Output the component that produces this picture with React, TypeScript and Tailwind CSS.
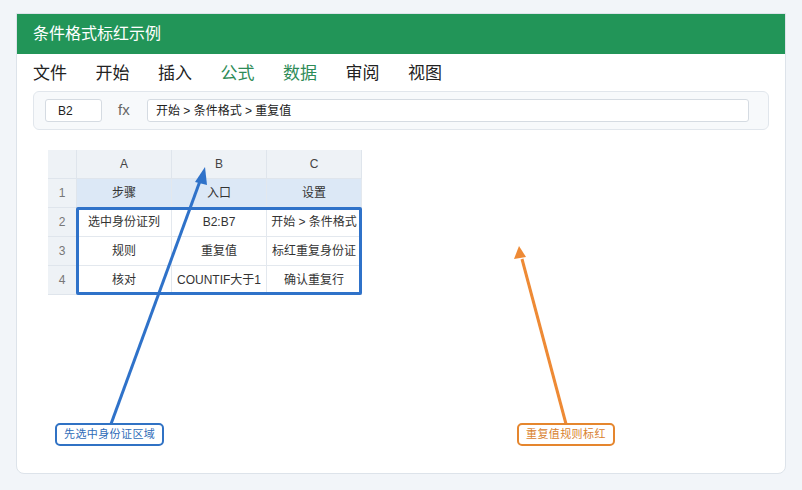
const menu = [
  { label: "文件", green: false },
  { label: "开始", green: false },
  { label: "插入", green: false },
  { label: "公式", green: true },
  { label: "数据", green: true },
  { label: "审阅", green: false },
  { label: "视图", green: false },
];

const rows = [
  ["步骤", "入口", "设置"],
  ["选中身份证列", "B2:B7", "开始 > 条件格式"],
  ["规则", "重复值", "标红重复身份证"],
  ["核对", "COUNTIF大于1", "确认重复行"],
];

const Sheet = () => {
  return (
    <div className="relative ml-[31px] mt-[20px] w-[314px]">
      <div className="grid grid-cols-[29px_95px_95px_95px] text-[12px] text-[#333]">
        <div className="h-[29px] bg-[#eef2f6] border-r border-b border-[#dfe5ec]" />
        {["A", "B", "C"].map((c) => (
          <div key={c} className="h-[29px] flex items-center justify-center bg-[#eef2f6] border-r border-b border-[#dfe5ec] text-[#444]">
            {c}
          </div>
        ))}
        {rows.map((r, i) => (
          <>
            <div key={"h" + i} className="h-[29px] flex items-center justify-center bg-[#eef2f6] border-r border-b border-[#dfe5ec] text-[#777]">
              {i + 1}
            </div>
            {r.map((v, j) => (
              <div
                key={i + "-" + j}
                className={`h-[29px] flex items-center justify-center whitespace-nowrap overflow-hidden border-r border-b border-[#e3e8ee] ${i == 0 ? "bg-[#dce8f6]" : "bg-white"}`}
              >
                {v}
              </div>
            ))}
          </>
        ))}
      </div>
      <div className="absolute left-[28px] top-[57px] w-[286px] h-[88px] border-[3px] border-[#2f72c9] rounded-[2px]" />
    </div>
  );
};

const App = () => {
  return (
    <div className="w-[802px] h-[490px] bg-[#f2f5f9] pt-[13px] pl-[16px]" style={{ fontFamily: '"Liberation Sans", "Noto Sans CJK SC", sans-serif' }}>
      <div className="relative w-[770px] h-[461px] bg-white border border-[#dde3ea] rounded-b-[8px] overflow-hidden">
        <div className="h-[40px] bg-[#229558] flex items-center pl-[16px] text-white text-[16px]">
          条件格式标红示例
        </div>
        <div className="flex items-center gap-[28.5px] pl-[16px] mt-[9px] h-[22px] text-[17px]">
          {menu.map((m) => (
            <span key={m.label} className={m.green ? "text-[#2e8b57]" : "text-[#222]"}>
              {m.label}
            </span>
          ))}
        </div>
        <div className="mx-[16px] mt-[6px] h-[39px] bg-[#f7f9fb] border border-[#e1e6ec] rounded-[6px] flex items-center pl-[11px] pr-[19px]">
          <div className="w-[57px] h-[23px] bg-white border border-[#d5dbe2] rounded-[3px] flex items-center pl-[12px] text-[12px] text-[#222]">
            B2
          </div>
          <span className="ml-[16px] w-[29px] text-[15px] text-[#666]">fx</span>
          <div className="flex-1 h-[23px] bg-white border border-[#d5dbe2] rounded-[3px] flex items-center pl-[8px] text-[12px] text-[#222]">
            开始 &gt; 条件格式 &gt; 重复值
          </div>
        </div>
        <Sheet />

        <svg className="absolute left-0 top-0" width="770" height="461" viewBox="0 0 770 461">
          <line x1="94" y1="410" x2="183" y2="167" stroke="#2f72c9" strokeWidth="3" />
          <polygon points="188,153 178,168 190,171" fill="#2f72c9" />
          <line x1="549" y1="410" x2="505" y2="245" stroke="#ee8a35" strokeWidth="3" />
          <polygon points="502,232 497,245 509,243" fill="#ee8a35" />
        </svg>

        <div className="absolute left-[38px] top-[409px] h-[23px] px-[7px] flex items-center bg-white border-2 border-[#3072c4] rounded-[5px] text-[11px] tracking-[0.4px] text-[#2f6cb8]">
          先选中身份证区域
        </div>
        <div className="absolute left-[500px] top-[409px] h-[23px] px-[7px] flex items-center bg-white border-2 border-[#e5862e] rounded-[5px] text-[11px] tracking-[0.4px] text-[#d9812e]">
          重复值规则标红
        </div>
      </div>
    </div>
  );
};

export default App;
